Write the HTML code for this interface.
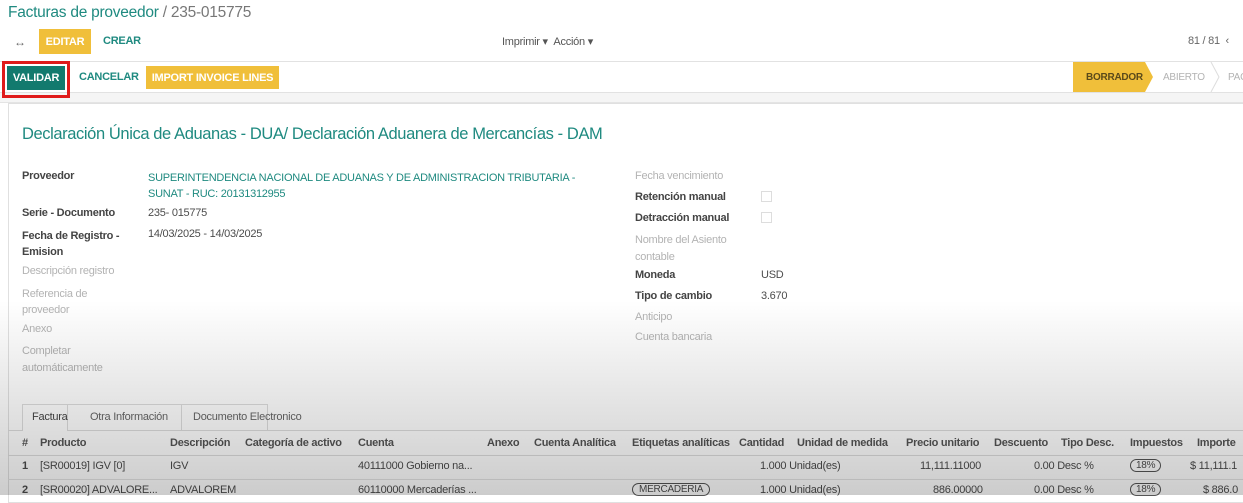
<!DOCTYPE html>
<html><head><meta charset="utf-8"><style>
*{box-sizing:border-box;margin:0;padding:0}
body{width:1243px;height:495px;overflow:hidden;background:#fff;font-family:"Liberation Sans",sans-serif;font-size:11px;letter-spacing:-0.25px;color:#4c4c4c;position:relative}
.a{position:absolute;white-space:nowrap}
.t{color:#1f8a80}
.b{font-weight:bold;color:#444}
.g{color:#b3b3b3}
.h{font-weight:bold;color:#555}
.btn{display:flex;align-items:center;justify-content:center;font-weight:bold}
</style></head><body>
<div class="a" style="left:8px;top:4px;font-size:15.5px;color:#1f8a80">Facturas de proveedor <span style="color:#777">/ 235-015775</span></div>
<div class="a" style="left:14px;top:35px;color:#666;font-size:12px">↔</div>
<div class="a btn" style="left:39px;top:29px;width:52px;height:25px;background:#f0bf3a;color:#fff">EDITAR</div>
<div class="a t" style="left:103px;top:35px;font-weight:bold">CREAR</div>
<div class="a" style="left:502px;top:35px;color:#555">Imprimir ▾ &nbsp;Acción ▾</div>
<div class="a" style="left:1188px;top:35px;color:#666">81 / 81 &nbsp;‹</div>
<div class="a" style="left:0;top:61px;width:1243px;height:32px;border-top:1px solid #e2e2e2;border-bottom:1px solid #e2e2e2"></div>
<div class="a" style="left:0;top:93px;width:1243px;height:10px;background:#f5f5f5;border-bottom:1px solid #e4e4e4"></div>
<div class="a" style="left:2px;top:61px;width:68px;height:37px;border:3px solid #e01b1b"></div>
<div class="a btn" style="left:7px;top:66px;width:58px;height:24px;background:#127a6e;color:#fff">VALIDAR</div>
<div class="a t" style="left:79px;top:71px;font-weight:bold">CANCELAR</div>
<div class="a btn" style="left:146px;top:66px;width:133px;height:23px;background:#f0bf3a;color:#fff">IMPORT INVOICE LINES</div>
<svg class="a" style="left:1073px;top:62px" width="170" height="30"><polygon points="0,0 72,0 80,15 72,30 0,30" fill="#f0bf3a"/><polyline points="138,0 146,15 138,30" fill="none" stroke="#ddd"/></svg>
<div class="a" style="left:1086px;top:72px;font-size:10px;font-weight:bold;color:#5a4a1a">BORRADOR</div>
<div class="a g" style="left:1163px;top:72px;font-size:10px">ABIERTO</div>
<div class="a g" style="left:1228px;top:72px;font-size:10px">PAG</div>
<div class="a" style="left:8px;top:103px;width:1240px;height:400px;border:1px solid #e0e0e0"></div>
<div class="a t" style="left:22px;top:125px;font-size:16.5px;letter-spacing:-0.4px">Declaración Única de Aduanas - DUA/ Declaración Aduanera de Mercancías - DAM</div>
<div class="a b" style="left:22px;top:170px">Proveedor</div>
<div class="a t" style="left:148px;top:170px;line-height:16px">SUPERINTENDENCIA NACIONAL DE ADUANAS Y DE ADMINISTRACION TRIBUTARIA -<br>SUNAT - RUC: 20131312955</div>
<div class="a b" style="left:22px;top:207px">Serie - Documento</div><div class="a" style="left:148px;top:207px">235- 015775</div>
<div class="a b" style="left:22px;top:228px;line-height:16px">Fecha de Registro -<br>Emision</div><div class="a" style="left:148px;top:228px">14/03/2025 - 14/03/2025</div>
<div class="a g" style="left:22px;top:265px">Descripción registro</div>
<div class="a g" style="left:22px;top:286px;line-height:16px">Referencia de<br>proveedor</div>
<div class="a g" style="left:22px;top:323px">Anexo</div>
<div class="a g" style="left:22px;top:343px;line-height:17px">Completar<br>automáticamente</div>
<div class="a g" style="left:635px;top:170px">Fecha vencimiento</div>
<div class="a b" style="left:635px;top:191px">Retención manual</div><div class="a" style="left:761px;top:191px;width:11px;height:11px;border:1px solid #ddd"></div>
<div class="a b" style="left:635px;top:212px">Detracción manual</div><div class="a" style="left:761px;top:212px;width:11px;height:11px;border:1px solid #ddd"></div>
<div class="a g" style="left:635px;top:232px;line-height:17px">Nombre del Asiento<br>contable</div>
<div class="a b" style="left:635px;top:269px">Moneda</div><div class="a" style="left:761px;top:269px">USD</div>
<div class="a b" style="left:635px;top:290px">Tipo de cambio</div><div class="a" style="left:761px;top:290px">3.670</div>
<div class="a g" style="left:635px;top:311px">Anticipo</div>
<div class="a g" style="left:635px;top:331px">Cuenta bancaria</div>
<div class="a" style="left:8px;top:430px;width:1240px;border-top:1px solid #ddd"></div>
<div class="a" style="left:22px;top:404px;width:46px;height:27px;border:1px solid #ddd;border-bottom:none;background:#fff"></div>
<div class="a" style="left:68px;top:404px;width:200px;height:26px;border:1px solid #ddd;border-left:none;border-bottom:none"></div>
<div class="a" style="left:181px;top:404px;height:26px;border-left:1px solid #ddd"></div>
<div class="a" style="left:32px;top:411px;color:#444">Factura</div>
<div class="a" style="left:90px;top:411px;color:#666">Otra Información</div>
<div class="a" style="left:193px;top:411px;color:#666">Documento Electronico</div>
<div class="a h" style="left:22px;top:437px">#</div>
<div class="a h" style="left:40px;top:437px">Producto</div>
<div class="a h" style="left:170px;top:437px">Descripción</div>
<div class="a h" style="left:245px;top:437px">Categoría de activo</div>
<div class="a h" style="left:358px;top:437px">Cuenta</div>
<div class="a h" style="left:487px;top:437px">Anexo</div>
<div class="a h" style="left:534px;top:437px">Cuenta Analítica</div>
<div class="a h" style="left:632px;top:437px">Etiquetas analíticas</div>
<div class="a h" style="left:739px;top:437px">Cantidad</div>
<div class="a h" style="left:797px;top:437px">Unidad de medida</div>
<div class="a h" style="left:906px;top:437px">Precio unitario</div>
<div class="a h" style="left:994px;top:437px">Descuento</div>
<div class="a h" style="left:1061px;top:437px">Tipo Desc.</div>
<div class="a h" style="left:1130px;top:437px">Impuestos</div>
<div class="a h" style="left:1197px;top:437px">Importe</div>
<div class="a" style="left:8px;top:455px;width:1240px;border-top:1px solid #ddd"></div>
<div class="a" style="left:8px;top:479px;width:1240px;border-top:1px solid #e4e4e4"></div>
<div class="a" style="left:22px;top:460px;font-weight:bold">1</div><div class="a" style="left:40px;top:460px">[SR00019] IGV [0]</div><div class="a" style="left:170px;top:460px">IGV</div><div class="a" style="left:358px;top:460px">40111000 Gobierno na...</div>
<div class="a" style="left:760px;top:460px">1.000 Unidad(es)</div><div class="a" style="left:920px;top:460px">11,111.11000</div><div class="a" style="left:1034px;top:460px">0.00 Desc %</div>
<div class="a" style="left:1130px;top:459px;border:1.5px solid #555;border-radius:8px;padding:0 5px;font-size:10px">18%</div><div class="a" style="left:1190px;top:460px">$ 11,111.1</div>
<div class="a" style="left:22px;top:484px;font-weight:bold">2</div><div class="a" style="left:40px;top:484px">[SR00020] ADVALORE...</div><div class="a" style="left:170px;top:484px">ADVALOREM</div><div class="a" style="left:358px;top:484px">60110000 Mercaderías ...</div>
<div class="a" style="left:632px;top:483px;border:1.5px solid #555;border-radius:8px;padding:0 6px;font-size:10px">MERCADERIA</div>
<div class="a" style="left:760px;top:484px">1.000 Unidad(es)</div><div class="a" style="left:933px;top:484px">886.00000</div><div class="a" style="left:1034px;top:484px">0.00 Desc %</div>
<div class="a" style="left:1130px;top:483px;border:1.5px solid #555;border-radius:8px;padding:0 5px;font-size:10px">18%</div><div class="a" style="left:1203px;top:484px">$ 886.0</div>
<div class="a" style="left:0;top:300px;width:1243px;height:195px;background:linear-gradient(rgba(0,0,0,0),rgba(0,0,0,0.1) 50%,rgba(0,0,0,0.2))"></div>
</body></html>
